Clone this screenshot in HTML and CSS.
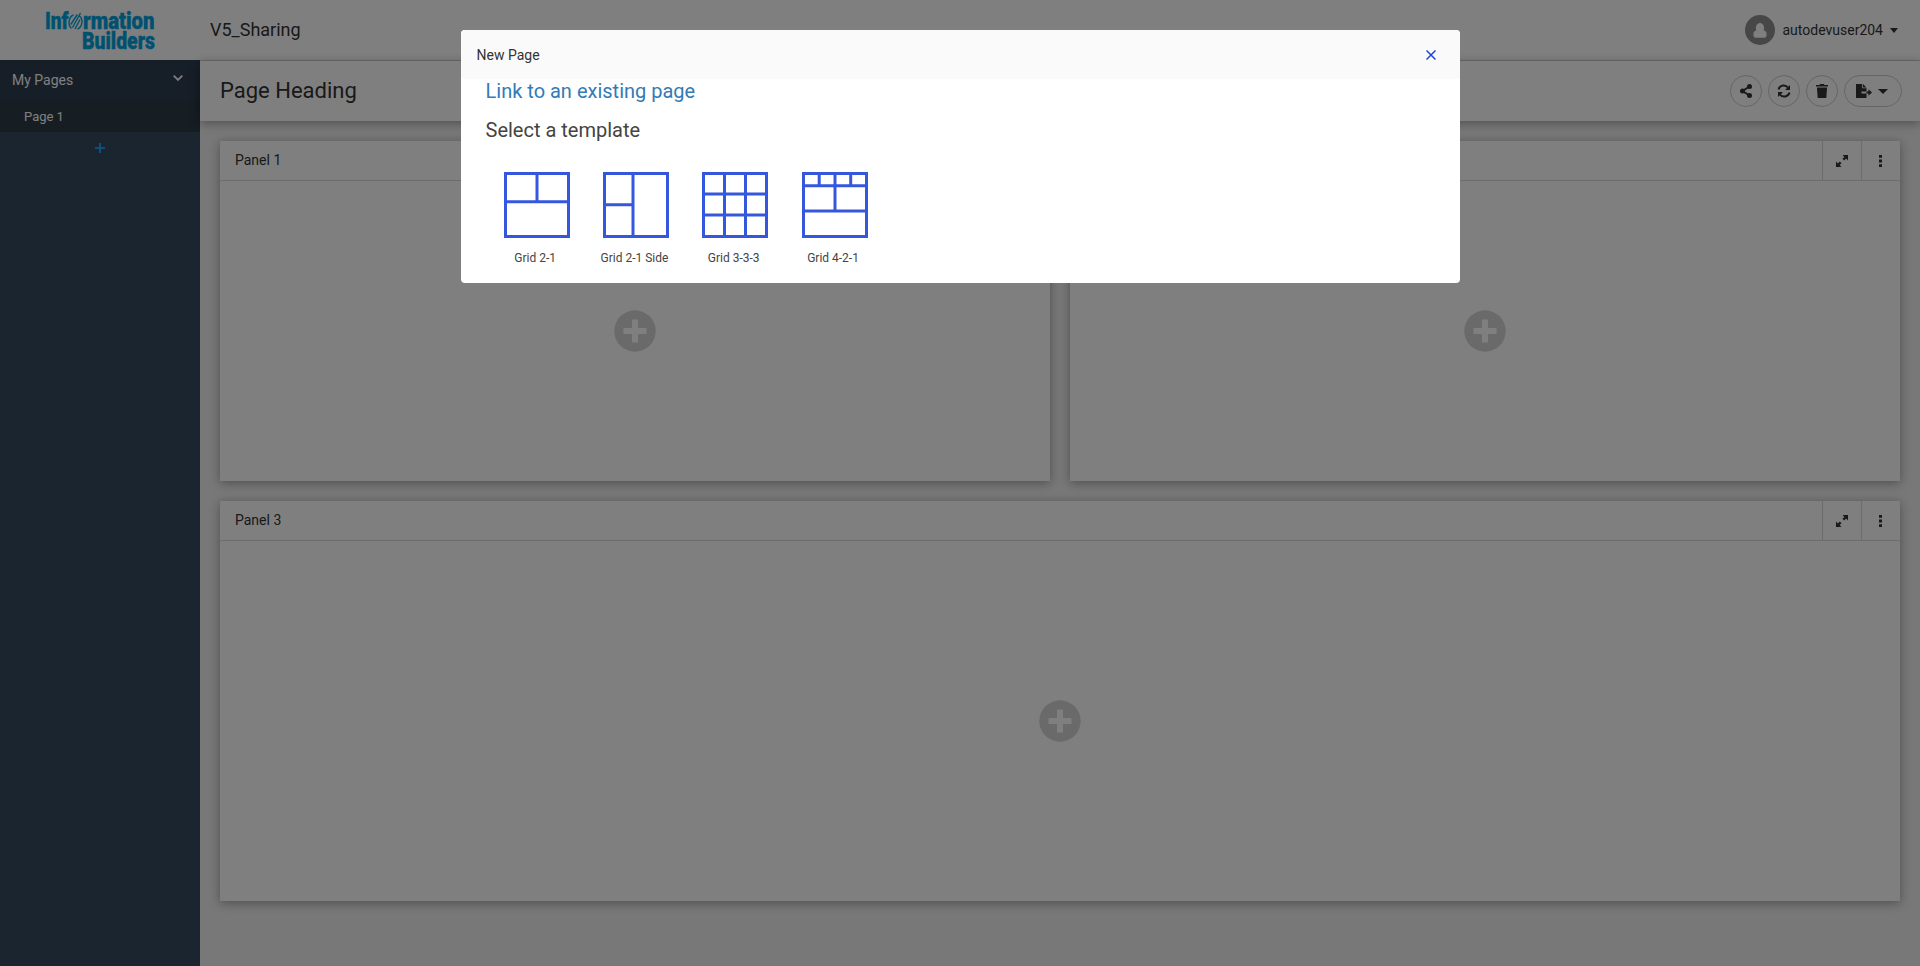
FILE: index.html
```html
<!DOCTYPE html>
<html lang="en">
<head>
<meta charset="utf-8">
<title>V5_Sharing</title>
<link rel="stylesheet" href="styles.css">
</head>
<body>
<svg class="defs" width="0" height="0">
  <symbol id="expand" viewBox="0 0 12 12"><path d="M6.500 0H12v5.500l-1.900-1.900L8.200 5.500 6.500 3.800 8.400 1.900zM5.500 12H0V6.500l1.900 1.900L3.800 6.500 5.500 8.200 3.600 10.100z"/></symbol>
  <symbol id="dots" viewBox="0 0 3 12"><path d="M0 0h3v2.800H0zM0 4.600h3v2.800H0zM0 9.200h3V12H0z"/></symbol>
  <symbol id="plus" viewBox="0 0 42 42"><circle cx="21" cy="21" r="20.700"/><path class="cross" d="M18 9.500h6V18h8.500v6H24v8.500h-6V24H9.500v-6H18z"/></symbol>
</svg>
<header class="topbar">
  <div class="brand">
    <svg class="logo" width="112" height="60" viewBox="0 0 112 60">
      <text x="0" y="28.500" textLength="23.500" lengthAdjust="spacingAndGlyphs">Inf</text>
      <path class="swirl" d="M26.500 28.500C22.500 25 23.500 17 28.500 15M34.500 16c4 3.500 3 11-2 13M25.800 24.500l6.500-10M27.500 27.500 35.500 13M30 29l5-9.500"/>
      <text x="38" y="28.500" textLength="71.500" lengthAdjust="spacingAndGlyphs">rmation</text>
      <text x="37" y="49.300" textLength="73" lengthAdjust="spacingAndGlyphs">Builders</text>
    </svg>
  </div>
  <div class="title">V5_Sharing</div>
  <div class="user">
    <span class="avatar"><svg width="14" height="15" viewBox="0 0 14 15"><path d="M3.500 7.200C2 6 3 0 7 0s5 6 3.500 7.200C13 7.600 14 10 13.500 12.500 13.300 14 12.500 14.700 11 14.700H3C1.500 14.700.700 14 .500 12.500 0 10 1 7.600 3.500 7.200z"/></svg></span>
    <span>autodevuser204</span>
    <i class="caret"></i>
  </div>
</header>
<div class="shell">
  <nav class="sidebar">
    <div class="group"><span>My Pages</span><svg width="10" height="6" viewBox="0 0 10 6"><path d="M.700.700 5 4.900 9.300.700"/></svg></div>
    <div class="item">Page 1</div>
    <div class="add"><svg width="10" height="10" viewBox="0 0 10 10"><path d="M5 0v10M0 5h10"/></svg></div>
  </nav>
  <main class="main">
    <div class="heading">
      <h1>Page Heading</h1>
      <div class="tools">
        <button class="tool"><svg width="12" height="14" viewBox="0 0 12 14"><path class="line" d="M9.500 2.500 2.500 7l7 4.500"/><circle cx="9.500" cy="2.500" r="2.500"/><circle cx="2.500" cy="7" r="2.500"/><circle cx="9.500" cy="11.500" r="2.500"/></svg></button>
        <button class="tool"><svg width="14" height="14" viewBox="0 0 14 14"><path class="line" d="M1.500 5.500A5.400 5.400 0 0 1 11 3.500M12.500 8.500A5.400 5.400 0 0 1 3 10.500"/><path d="M13 1v5H8zM1 13V8h5z"/></svg></button>
        <button class="tool"><svg width="12" height="14" viewBox="0 0 12 14"><path d="M0 1h3.500l.700-1h3.600l.700 1H12v1.500H0zM.900 3.500h10.200L10.300 14H1.700z"/></svg></button>
        <button class="tool wide"><svg width="16" height="14" viewBox="0 0 16 14"><path d="M0 0h6.200v4.200h4.300v3.300H5.500v2h5V14H0zM7 0l3.500 3.500H7zM10.500 7.500h2V5.300L16 8.500l-3.500 3.200V9.500h-2z"/></svg><i class="caret"></i></button>
      </div>
    </div>
    <div class="grid">
      <section class="panel">
        <div class="panel-head"><span class="name">Panel 1</span><span class="cell"><svg width="12" height="12"><use href="#expand"/></svg></span><span class="cell menu"><svg width="3" height="12"><use href="#dots"/></svg></span></div>
        <div class="panel-body"><svg width="42" height="42"><use href="#plus"/></svg></div>
      </section>
      <section class="panel">
        <div class="panel-head"><span class="name">Panel 2</span><span class="cell"><svg width="12" height="12"><use href="#expand"/></svg></span><span class="cell menu"><svg width="3" height="12"><use href="#dots"/></svg></span></div>
        <div class="panel-body"><svg width="42" height="42"><use href="#plus"/></svg></div>
      </section>
      <section class="panel full">
        <div class="panel-head"><span class="name">Panel 3</span><span class="cell"><svg width="12" height="12"><use href="#expand"/></svg></span><span class="cell menu"><svg width="3" height="12"><use href="#dots"/></svg></span></div>
        <div class="panel-body"><svg width="42" height="42"><use href="#plus"/></svg></div>
      </section>
    </div>
  </main>
</div>
<div class="backdrop">
  <div class="modal">
    <div class="modal-head"><span>New Page</span><svg width="10" height="10" viewBox="0 0 10 10"><path d="M.500.500l9 9M9.500.500l-9 9"/></svg></div>
    <div class="modal-body">
      <a class="link">Link to an existing page</a>
      <h2>Select a template</h2>
      <div class="templates">
        <figure><svg width="66" height="66" viewBox="0 0 66 66"><path d="M1.500 1.500h63v63h-63zM1.500 29.700h63M33 1.500v28"/></svg><figcaption>Grid 2-1</figcaption></figure>
        <figure><svg width="66" height="66" viewBox="0 0 66 66"><path d="M1.500 1.500h63v63h-63zM30 1.500v63M1.500 32.700H30"/></svg><figcaption>Grid 2-1 Side</figcaption></figure>
        <figure><svg width="66" height="66" viewBox="0 0 66 66"><path d="M1.500 1.500h63v63h-63zM1.500 22h63M1.500 43h63M22.500 1.500v63M43.500 1.500v63"/></svg><figcaption>Grid 3-3-3</figcaption></figure>
        <figure><svg width="66" height="66" viewBox="0 0 66 66"><path d="M1.500 1.500h63v63h-63zM1.500 13.700h63M1.500 39h63M33 1.500V39M17.200 1.500v12M48.700 1.500v12"/></svg><figcaption>Grid 4-2-1</figcaption></figure>
      </div>
    </div>
  </div>
</div>
</body>
</html>
```
FILE: styles.css
```css
* { box-sizing: border-box; }
body { margin: 0; height: 966px; overflow: hidden; display: flex; flex-direction: column; font: 14px/20px Roboto, "Liberation Sans", sans-serif; color: #333; background: #fff; }
svg { display: block; flex: none; fill: currentColor; }
.defs { position: absolute; }

.topbar { height: 60px; flex: none; display: flex; align-items: center; background: #fff; }
.brand { width: 200px; padding-left: 45px; }
.logo { fill: #00a3e0; }
.logo text { font: 900 24.5px Roboto, sans-serif; stroke: #00a3e0; stroke-width: .4; }
.swirl { fill: none; stroke: #00a3e0; stroke-width: 1.4; }
.title { flex: 1; padding-left: 10px; font-size: 18px; }
.user { display: flex; align-items: center; padding-right: 22px; }
.avatar { width: 30px; height: 30px; margin-right: 8px; border-radius: 50%; background: #8f8f8f; color: #fff; display: flex; align-items: center; justify-content: center; }
.caret { border: 4.5px solid transparent; border-width: 5px 4px 0; border-top-color: currentColor; margin-left: 7px; }

.shell { flex: 1; display: flex; min-height: 0; }
.sidebar { width: 200px; flex: none; background: #364a5e; color: #fff; }
.group { height: 40px; padding: 0 17px 0 12px; display: flex; align-items: center; justify-content: space-between; background: #2d3c50; }
.group svg { fill: none; stroke: #fff; stroke-width: 1.8; margin-bottom: 4px; }
.item { height: 32px; padding-left: 24px; font-size: 13px; line-height: 33px; background: #2c3a46; }
.add { height: 32px; display: flex; align-items: center; justify-content: center; }
.add svg { stroke: #1fa0f0; stroke-width: 2; }

.main { flex: 1; background: #f0f0f0; border-top: 1px solid #d8d8d8; }
.heading { height: 60px; padding: 0 18px 0 20px; display: flex; align-items: center; justify-content: space-between; background: #fff; box-shadow: 0 2px 10px rgba(0,0,0,.35); }
h1 { margin: 0; font-size: 22px; font-weight: 400; }
.tools { display: flex; gap: 6px; }
.tool { width: 32px; height: 32px; padding: 0; border: 1px solid #ccc; border-radius: 16px; background: #fff; color: #333; display: flex; align-items: center; justify-content: center; }
.wide { width: 58px; padding-right: 2px; }
.wide .caret { border-width: 5px 4.500px 0; border-left-width: 5px; border-right-width: 5px; margin-left: 6px; }
.tool .line { fill: none; stroke: currentColor; stroke-width: 2; }

.grid { padding: 20px; display: grid; grid-template-columns: 1fr 1fr; grid-template-rows: 340px 400px; gap: 20px; }
.panel { display: flex; flex-direction: column; background: #fff; box-shadow: 0 2px 10px rgba(0,0,0,.35); }
.full { grid-column: span 2; }
.panel-head { height: 40px; flex: none; display: flex; border-bottom: 1px solid #d8d8d8; }
.name { flex: 1; padding-left: 15px; line-height: 39px; }
.cell { width: 39px; border-left: 1px solid #d8d8d8; display: flex; align-items: center; justify-content: center; }
.menu { padding-right: 2px; }
.panel-body { flex: 1; display: flex; align-items: center; justify-content: center; color: #d4d4d4; }
.cross { fill: #fff; }

.backdrop { position: absolute; inset: 0; padding-top: 30px; background: rgba(0,0,0,.5); }
.modal { width: 999px; height: 253px; margin-left: 461px; border-radius: 4px; overflow: hidden; background: #fff; }
.modal-head { height: 49px; padding: 0 24px 0 15.5px; display: flex; align-items: center; justify-content: space-between; background: #fafafa; }
.modal-head svg { stroke: #1f45d8; stroke-width: 1.5; }
.modal-body { padding-left: 24.5px; }
.link { display: block; font-size: 20px; line-height: 24px; color: #337ab7; }
h2 { margin: 15px 0 0; font-size: 20px; line-height: 24px; font-weight: 400; color: #444; }
.templates { display: flex; padding-top: 30px; }
figure { width: 99.3px; margin: 0; display: flex; flex-direction: column; align-items: center; }
figure svg { fill: none; stroke: #3557dd; stroke-width: 3; margin-left: 3px; }
figcaption { margin-top: 11px; font-size: 12px; line-height: 18px; color: #444; white-space: nowrap; }
```
